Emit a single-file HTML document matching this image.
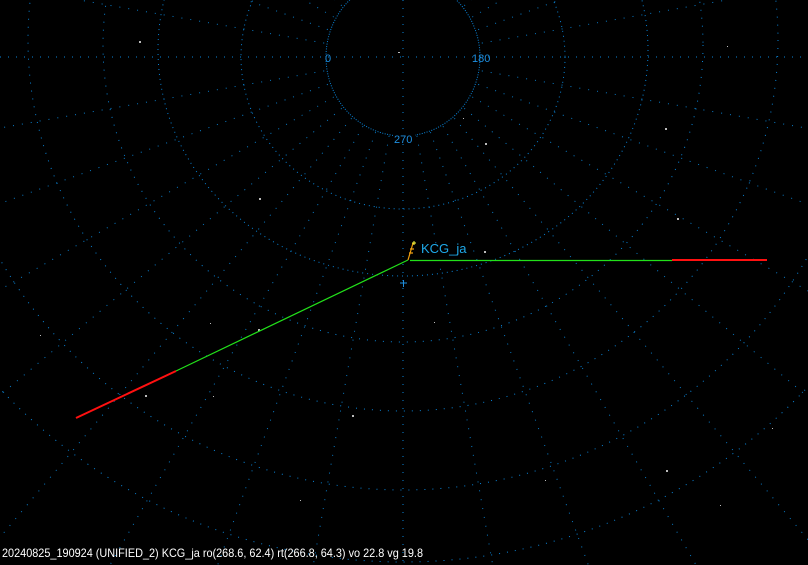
<!DOCTYPE html>
<html><head><meta charset="utf-8"><style>
html,body{margin:0;padding:0;background:#000;width:808px;height:565px;overflow:hidden}
svg{display:block;position:absolute;left:0;top:0}
</style></head><body>
<svg width="808" height="565" viewBox="0 0 808 565" xmlns="http://www.w3.org/2000/svg">
<rect width="808" height="565" fill="#000"/>
<g fill="none" stroke="#0a84d8" stroke-width="1">
  <ellipse cx="403" cy="57" rx="77" ry="79" stroke-dasharray="1 1.5"/>
  <g stroke-dasharray="1 4">
    <ellipse cx="403" cy="57" rx="162" ry="152"/>
    <ellipse cx="403" cy="50" rx="245" ry="226"/>
  </g>
  <g stroke-dasharray="1 7">
    <ellipse cx="403" cy="45" rx="300" ry="297"/>
    <ellipse cx="403" cy="40" rx="375" ry="371"/>
    <ellipse cx="403" cy="30" rx="465" ry="460"/>
    <ellipse cx="403" cy="20" rx="550" ry="542"/>
    <line x1="0" y1="57" x2="808" y2="57"/>
    <line x1="403" y1="0" x2="403" y2="565"/>
  </g>
</g>
<g fill="none" stroke="#0a7cc8" stroke-dasharray="1 8">
  <path d="M403,57 m78.8,13.9 L1300,215 M403,57 m75.2,27.4 L1300,383 M403,57 m69.3,40 L1300,575 M403,57 m61.3,51.4 L1300,810 M403,57 m51.4,61.3 L1300,1126 M403,57 m40,69.3 L1000,1092 M403,57 m27.4,75.2 L700,871 M403,57 m13.9,78.8 L560,946
  M403,57 m-78.8,13.9 L-494,215 M403,57 m-75.2,27.4 L-494,383 M403,57 m-69.3,40 L-494,575 M403,57 m-61.3,51.4 L-494,810 M403,57 m-51.4,61.3 L-494,1126 M403,57 m-40,69.3 L-194,1092 M403,57 m-27.4,75.2 L106,871 M403,57 m-13.9,78.8 L246,946
  M403,57 m78.8,-13.9 L1300,-101 M403,57 m75.2,-27.4 L1300,-269 M403,57 m69.3,-40 L1000,-288 M403,57 m61.3,-51.4 L900,-360
  M403,57 m-78.8,-13.9 L-494,-101 M403,57 m-75.2,-27.4 L-494,-269 M403,57 m-69.3,-40 L-194,-288 M403,57 m-61.3,-51.4 L-94,-360"/>
</g>
<g font-family="'Liberation Sans',sans-serif" font-size="11" fill="#1e8fe0">
  <text x="325" y="62">0</text>
  <text x="472" y="62">180</text>
  <rect x="393" y="131" width="22" height="12" fill="#000"/>
  <text x="394" y="143">270</text>
</g>
<g fill="#bbb">
  <rect x="398" y="52" width="2" height="1"/><rect x="463" y="118" width="1" height="1"/><rect x="485" y="143" width="2" height="2"/>
  <rect x="259" y="198" width="2" height="2"/><rect x="665" y="128" width="2" height="2"/><rect x="727" y="46" width="1" height="1"/>
  <rect x="677" y="218" width="2" height="2"/><rect x="210" y="323" width="1" height="1"/><rect x="145" y="395" width="2" height="2"/>
  <rect x="352" y="415" width="2" height="2"/><rect x="434" y="322" width="1" height="1"/><rect x="666" y="470" width="2" height="2"/>
  <rect x="772" y="428" width="1" height="1"/><rect x="484" y="251" width="2" height="2"/><rect x="258" y="329" width="2" height="2"/>
  <rect x="139" y="41" width="2" height="2"/><rect x="545" y="480" width="1" height="1"/><rect x="720" y="505" width="1" height="1"/>
  <rect x="213" y="396" width="1" height="1"/><rect x="300" y="500" width="1" height="1"/><rect x="40" y="335" width="1" height="1"/>
</g>
<line x1="410" y1="260.5" x2="672" y2="260.5" stroke="#22e01a" stroke-width="1.2"/>
<line x1="672" y1="260" x2="767" y2="260" stroke="#ff1010" stroke-width="2"/>
<line x1="408" y1="260" x2="176" y2="371" stroke="#22e01a" stroke-width="1.2"/>
<line x1="176" y1="371" x2="76" y2="418" stroke="#ff1010" stroke-width="2"/>
<g stroke="#f0a010" stroke-width="1.2" fill="none">
  <path d="M408,260 L411,250 L413,243"/>
  <path d="M409,253 h4 M410,249 h4"/>
</g>
<path d="M412,243 h4 M414,241 v4" stroke="#ffff40" stroke-width="1"/>
<path d="M400,283 h7 M403.5,280 v7" stroke="#1e8fe0" stroke-width="1"/>
<text x="421" y="253" font-family="'Liberation Sans',sans-serif" font-size="13" fill="#1ea8e8">KCG_ja</text>
<text x="2" y="557" font-family="'Liberation Sans',sans-serif" font-size="12" fill="#fff" textLength="421" lengthAdjust="spacingAndGlyphs">20240825_190924 (UNIFIED_2) KCG_ja ro(268.6, 62.4) rt(266.8, 64.3) vo 22.8 vg 19.8</text>
</svg>
</body></html>
